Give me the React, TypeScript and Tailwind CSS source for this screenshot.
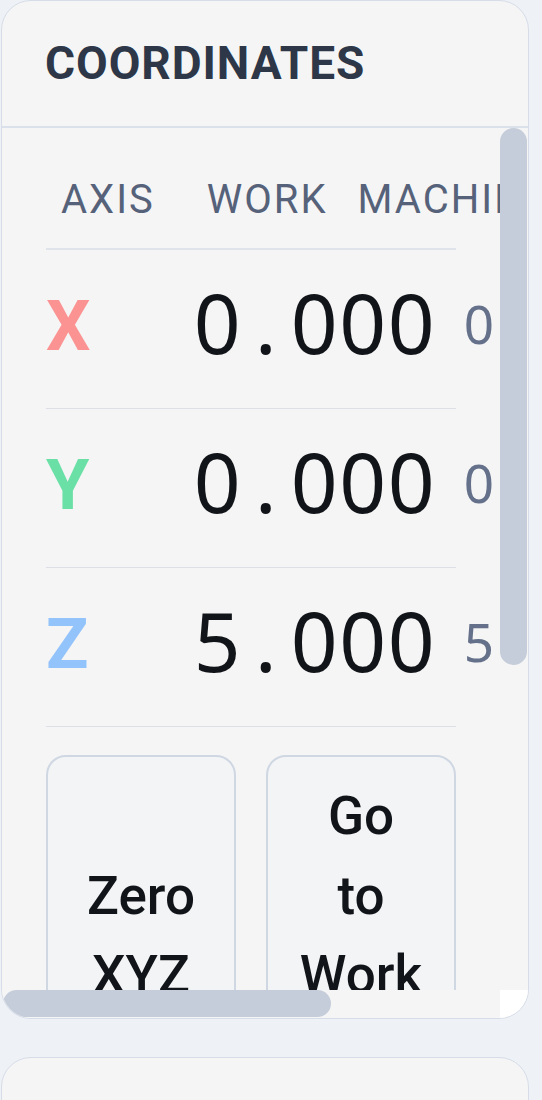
const axes = [
  { name: 'X', color: 'text-[#fb9393]', work: '0.000', machine: '0.000' },
  { name: 'Y', color: 'text-[#6ae0a6]', work: '0.000', machine: '0.000' },
  { name: 'Z', color: 'text-[#92c3fa]', work: '5.000', machine: '5.000' },
];

// fixed-width cells so the readout stays monospaced with a plain zero
function Digits({ value, cell }: { value: string; cell: string }) {
  return (
    <span className="flex">
      {value.split('').map((ch, i) => (
        <span key={i} className={`${cell} text-center`}>
          {ch}
        </span>
      ))}
    </span>
  );
}

function AxisRow({ name, color, work, machine }: { name: string; color: string; work: string; machine: string }) {
  return (
    <div className="w-[410px] h-[159px] flex items-center border-b border-[#dcdfe5] last:border-b-0 whitespace-nowrap">
      <div className={`w-[147px] shrink-0 pb-[6px] text-[70px] font-bold font-['Roboto',sans-serif] ${color}`}>{name}</div>
      <div className="shrink-0 pb-[14px] text-[82px] leading-none text-[#111418] font-['Noto_Sans',sans-serif]">
        <Digits value={work} cell="w-[48.5px]" />
      </div>
      <div className="shrink-0 ml-[28px] pb-[12px] text-[53px] leading-none text-[#65718a] font-['Noto_Sans',sans-serif]">
        <Digits value={machine} cell="w-[31px]" />
      </div>
    </div>
  );
}

function ActionButton({ label }: { label: string }) {
  return (
    <button className="flex items-center justify-center text-center rounded-[20px] border-2 border-[#cfd7e3] bg-[#f3f4f6] px-8 py-[20px] text-[53px] leading-[1.5] font-medium text-[#111418]">
      {label}
    </button>
  );
}

export default function App() {
  return (
    <div className="h-[1100px] overflow-hidden bg-[#eef1f6] pl-px pr-[13px] flex flex-col gap-[38px] font-['Roboto',sans-serif]">
      <section className="h-[1019px] shrink-0 flex flex-col rounded-[30px] border border-[#d6dde8] bg-[#f5f5f5] overflow-hidden">
        <header className="h-[127px] shrink-0 flex items-center px-[43px] border-b-2 border-[#dbe1ea]">
          <h2 className="text-[46px] font-bold tracking-[0.02em] text-[#2d3748]">COORDINATES</h2>
        </header>
        <div className="relative flex-1 overflow-hidden">
          <div className="w-[750px] pl-[44px] pt-[23px]">
            <div className="w-[410px] h-[99px] flex items-center border-b-2 border-[#dfe3ea] whitespace-nowrap text-[40px] tracking-[0.05em] text-[#56627a] uppercase">
              <span className="ml-[15px]">Axis</span>
              <span className="ml-[52px]">Work</span>
              <span className="ml-[30px]">Machine</span>
            </div>
            {axes.map((a) => (
              <AxisRow key={a.name} {...a} />
            ))}
            <div className="w-[410px] mt-[28px] grid grid-cols-2 gap-[30px]">
              <ActionButton label="Zero XYZ" />
              <ActionButton label="Go to Work Zero" />
            </div>
          </div>

          {/* scrollbars */}
          <div className="absolute top-0 right-0 bottom-[28px] w-[28px] bg-[#f5f5f5]">
            <div className="w-[27px] h-[537px] rounded-full bg-[#c6cdda]" />
          </div>
          <div className="absolute left-0 bottom-0 right-[28px] h-[28px] bg-[#f5f5f5]">
            <div className="ml-px w-[328px] h-[27px] rounded-full bg-[#c6cdda]" />
          </div>
          <div className="absolute right-0 bottom-0 w-[28px] h-[28px] bg-white" />
        </div>
      </section>
      <section className="h-[200px] shrink-0 rounded-[30px] border border-[#d6dde8] bg-[#f5f5f5]" />
    </div>
  );
}
